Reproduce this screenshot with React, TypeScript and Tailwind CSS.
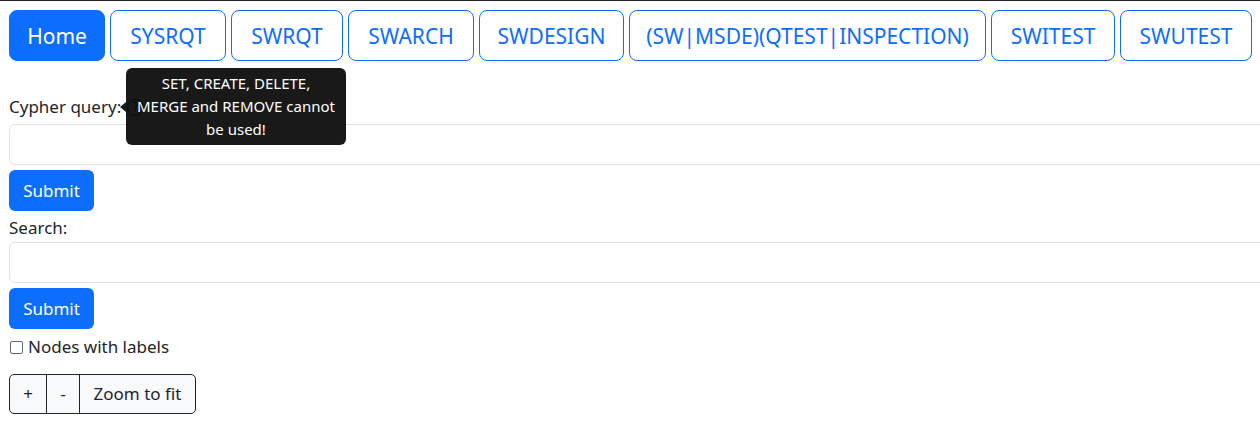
import React from "react";

// Navigation tabs along the top
const tabs = [
  { label: "Home", width: "w-[96px]", active: true },
  { label: "SYSRQT", width: "w-[116px]" },
  { label: "SWRQT", width: "w-[112px]" },
  { label: "SWARCH", width: "w-[126px]" },
  { label: "SWDESIGN", width: "w-[145px]" },
  { label: "(SW|MSDE)(QTEST|INSPECTION)", width: "w-[357px]" },
  { label: "SWITEST", width: "w-[124px]" },
  { label: "SWUTEST", width: "w-[132px]" },
];

function Tooltip() {
  return (
    <div className="absolute left-[120px] top-[67px] flex items-center">
      <div className="h-0 w-0 border-y-[5px] border-r-[6px] border-y-transparent border-r-black/90" />
      <div className="flex h-[77px] w-[220px] flex-col items-center justify-center rounded-[6px] bg-black/90 text-center text-[15px] leading-[23px] text-white">
        <span>SET, CREATE, DELETE,</span>
        <span>MERGE and REMOVE cannot</span>
        <span>be used!</span>
      </div>
    </div>
  );
}

export default function App() {
  return (
    <div
      className="relative min-h-screen overflow-hidden border-t border-[#222] bg-white pl-[9px] text-[#212529]"
      style={{ fontFamily: '"Noto Sans", "Open Sans", sans-serif' }}
    >
      {/* Tabs */}
      <nav className="mt-[9px] flex gap-[5px]">
        {tabs.map((tab) => (
          <button
            key={tab.label}
            type="button"
            className={`flex h-[51px] shrink-0 items-center justify-center rounded-[8px] border border-[#0d6efd] pt-[2px] text-[21px] ${tab.width} ${
              tab.active ? "bg-[#0d6efd] text-white" : "bg-white text-[#0d6efd]"
            }`}
          >
            {tab.label}
          </button>
        ))}
      </nav>

      {/* Cypher query */}
      <div className="mt-[34px] flex h-[24px] items-center text-[17px]">
        <span>Cypher query:</span>
        <span className="ml-[6px] flex h-[17px] w-[17px] items-center justify-center rounded-full border border-[#444] text-[12px] text-[#444]">
          ?
        </span>
      </div>
      <input
        type="text"
        className="mt-[5px] block h-[41px] w-[1290px] rounded-[6px] border border-[#dee2e6] bg-white"
      />
      <button
        type="button"
        className="mt-[5px] flex h-[41px] w-[85px] items-center justify-center rounded-[6px] bg-[#0d6efd] text-[17px] text-white"
      >
        Submit
      </button>

      {/* Search */}
      <div className="mt-[5px] flex h-[24px] items-center text-[17px]">Search:</div>
      <input
        type="text"
        className="mt-[2px] block h-[41px] w-[1290px] rounded-[6px] border border-[#dee2e6] bg-white"
      />
      <button
        type="button"
        className="mt-[5px] flex h-[41px] w-[85px] items-center justify-center rounded-[6px] bg-[#0d6efd] text-[17px] text-white"
      >
        Submit
      </button>

      {/* Labels toggle */}
      <label className="mt-[6px] flex h-[24px] items-center text-[17px]">
        <input
          type="checkbox"
          className="ml-[1px] mr-[5px] h-[13px] w-[13px] appearance-none rounded-[2px] border border-[#666] bg-white"
        />
        Nodes with labels
      </label>

      {/* Zoom controls */}
      <div className="mt-[15px] flex h-[40px] w-[187px] overflow-hidden rounded-[5px] border border-[#212529] bg-[#f8f9fa] text-[17px]">
        <button type="button" className="w-[37px] border-r border-[#212529]">
          +
        </button>
        <button type="button" className="w-[33px] border-r border-[#212529]">
          -
        </button>
        <button type="button" className="flex-1">
          Zoom to fit
        </button>
      </div>

      <Tooltip />
    </div>
  );
}
